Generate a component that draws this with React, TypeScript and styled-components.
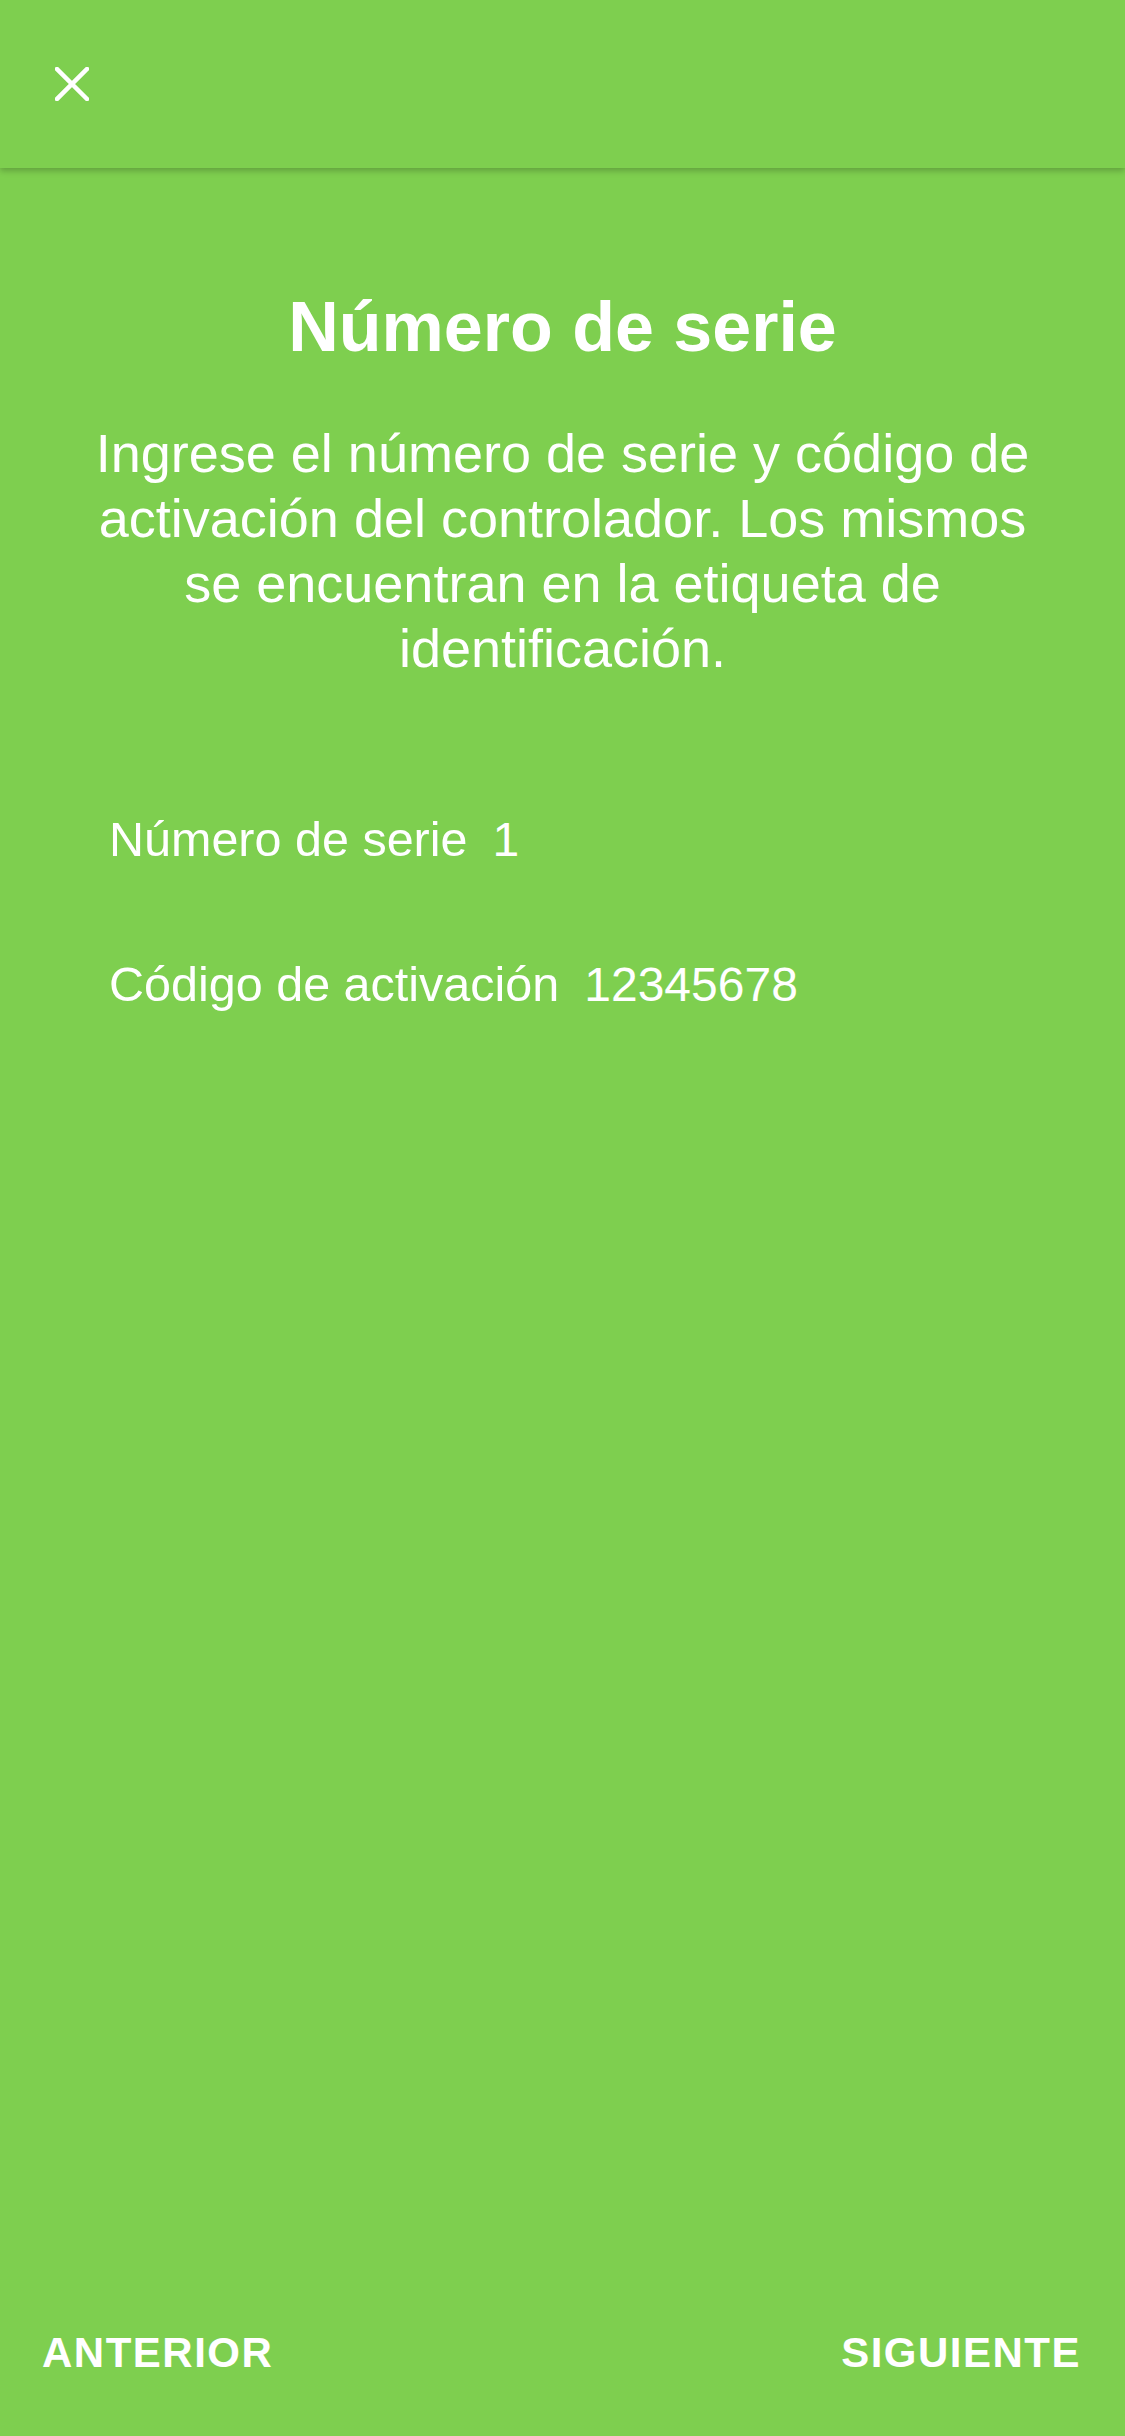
import styled, { createGlobalStyle } from "styled-components";

const GlobalStyle = createGlobalStyle`
  html, body {
    margin: 0;
    padding: 0;
    background: #7ecf4f;
  }
  body {
    font-family: "Liberation Sans", Arial, sans-serif;
    color: #ffffff;
  }
`;

const Page = styled.div`
  min-height: 2436px;
  display: flex;
  flex-direction: column;
  background: #7ecf4f;
`;

const Header = styled.header`
  height: 168px;
  display: flex;
  align-items: center;
  padding-left: 55px;
  box-shadow: 0 3px 6px rgba(0, 0, 0, 0.22);
  position: relative;
  z-index: 1;
`;

const CloseButton = styled.button`
  width: 34px;
  height: 34px;
  padding: 0;
  border: none;
  background: transparent;
  display: flex;
  cursor: pointer;
`;

const Main = styled.main`
  display: flex;
  flex-direction: column;
  align-items: center;
  padding: 117px 70px 0;
`;

const Title = styled.h1`
  margin: 0;
  font-size: 70px;
  line-height: 84px;
  font-weight: 700;
  text-align: center;
`;

const Description = styled.p`
  margin: 52px 0 0;
  font-size: 54px;
  line-height: 65px;
  text-align: center;
`;

const Fields = styled.div`
  align-self: stretch;
  display: flex;
  flex-direction: column;
  gap: 88px;
  margin-top: 130px;
  padding-left: 39px;
`;

const Field = styled.div`
  display: flex;
  align-items: baseline;
  gap: 25px;
  font-size: 48.5px;
  line-height: 56px;
`;

const Value = styled.span`
  font-size: 48px;
`;

const Footer = styled.footer`
  margin-top: auto;
  display: flex;
  justify-content: space-between;
  padding: 0 44px 58px 42px;
`;

const NavButton = styled.button`
  border: none;
  background: transparent;
  padding: 0;
  color: #ffffff;
  font-family: "Liberation Sans", Arial, sans-serif;
  font-size: 42px;
  line-height: 50px;
  font-weight: 700;
  letter-spacing: 1.5px;
  cursor: pointer;
`;

const CloseIcon = () => (
  <svg width="34" height="34" viewBox="0 0 34 34">
    <path d="M2 2 L32 32 M32 2 L2 32" stroke="#fff" strokeWidth="4.5" strokeLinecap="square" />
  </svg>
);

export default function App() {
  return (
    <>
      <GlobalStyle />
      <Page>
        <Header>
          <CloseButton aria-label="Cerrar">
            <CloseIcon />
          </CloseButton>
        </Header>
        <Main>
          <Title>Número de serie</Title>
          <Description>
            Ingrese el número de serie y código de activación del controlador.
            Los mismos se encuentran en la etiqueta de identificación.
          </Description>
          <Fields>
            <Field>
              <span>Número de serie</span>
              <Value>1</Value>
            </Field>
            <Field>
              <span>Código de activación</span>
              <Value>12345678</Value>
            </Field>
          </Fields>
        </Main>
        <Footer>
          <NavButton>ANTERIOR</NavButton>
          <NavButton>SIGUIENTE</NavButton>
        </Footer>
      </Page>
    </>
  );
}
